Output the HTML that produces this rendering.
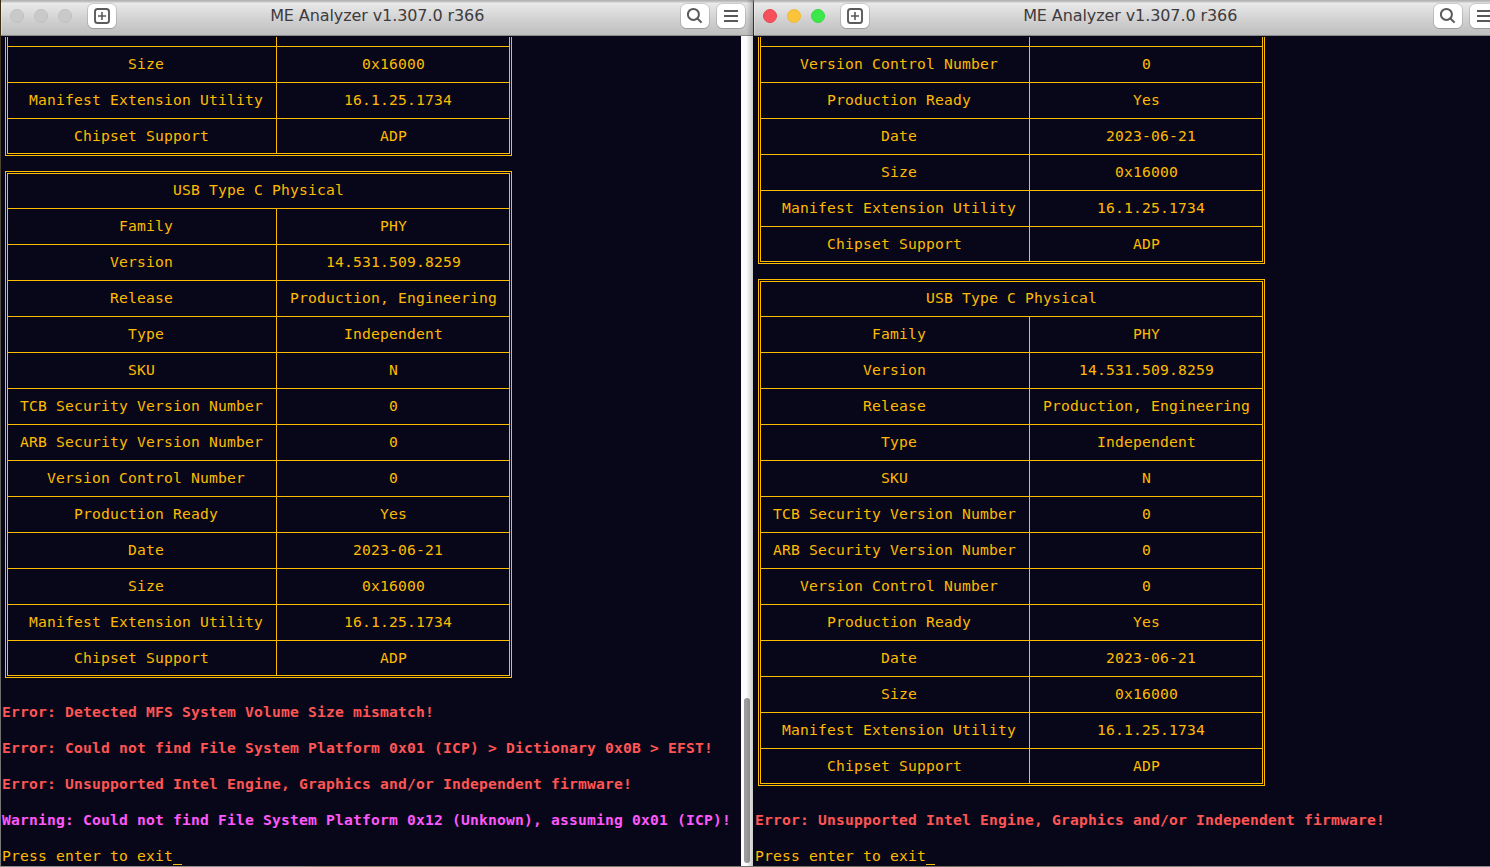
<!DOCTYPE html>
<html><head><meta charset="utf-8"><title>ME Analyzer v1.307.0 r366</title>
<style>
html,body{margin:0;padding:0}
body{width:1490px;height:867px;overflow:hidden;position:relative;background:linear-gradient(#3a2b0a 0,#4a4228 120px,#5c5a50 400px,#6e6e6a 700px,#7c7c78 865px,#7a7872 866px);font-family:"DejaVu Sans","Liberation Sans",sans-serif}
.win{position:absolute;top:0;height:866px;overflow:hidden;background:#08071a}
#wl{left:1px;width:752px}
#wr{left:753px;width:760px}
.bl{position:absolute;z-index:5;left:0;top:0;width:1px;height:866px;background:linear-gradient(#707070 0,#3c3c3c 3px,#2c2c2c 35px,#05040f 36px)}
.in{position:absolute;top:0;height:866px;width:760px}
#wl .in{left:-1px}
#wr .in{left:0}
.tb{position:absolute;left:0;top:0;width:760px;height:36px;box-sizing:border-box;background:linear-gradient(#b0b0b0 0,#b4b4b4 .5px,#c3c3c3 1.5px,#d6d6d6 2.5px,#ebebeb 3.5px,#e7e7e7 4.5px,#d2d2d2 19px,#bfbfbf 34px,#bdbdbd 34.9px,#8e8e8e 35px,#888 36px)}
.c{position:absolute;top:9px;width:14px;height:14px;border-radius:50%;box-sizing:border-box;background:#c9c9c9;border:1px solid #c0c0c0}
.c1{left:10px}.c2{left:34px}.c3{left:58px}
.act .c1{background:#f4515a;border-color:#ec4652}
.act .c2{background:#f9c43c;border-color:#f0b933}
.act .c3{background:#3ce74c;border-color:#32db42}
.btn{position:absolute;top:4px;width:28px;height:24px;background:#fff;border-radius:5.5px;box-shadow:0 0 0 1px rgba(0,0,0,.12),0 1px 1px rgba(0,0,0,.10)}
.btn svg{display:block}
.title{position:absolute;left:0.7px;width:753px;letter-spacing:-0.096px;top:0;height:36px;line-height:31px;text-align:center;font-size:16px;color:#403b3e;white-space:pre}
.term{position:absolute;left:0;top:0;width:760px;height:866px;font-family:"DejaVu Sans Mono","Liberation Mono",monospace;font-size:14.667px;color:#fdbb02}
.term i{position:absolute;display:block;background:#fdbb02}
.w{position:absolute;height:18px;line-height:18px;white-space:pre;letter-spacing:0.1762px}
.r{color:#ff5554;font-weight:bold}
.m{color:#fe58fb;font-weight:bold}
.sb{position:absolute;left:741px;top:36px;width:12px;height:830px;background:#fdfdfd}
.sh{position:absolute;left:746px;top:0;width:7px;height:866px;background:linear-gradient(90deg,rgba(0,0,0,0),rgba(0,0,0,.05) 2px,rgba(0,0,0,.2) 7px)}
.hl{position:absolute;left:1px;top:3px;width:1px;height:32px;background:rgba(255,255,255,.3)}
.sb b{position:absolute;left:3px;top:662px;width:6px;height:165px;border-radius:3px;background:#9d9d9d}
.dk{position:absolute;left:0;top:866px;width:1490px;height:1px;background:linear-gradient(90deg,#8e8e8a 0,#8c8c86 300px,#8a846a 320px,#77756c 700px,#6e6a60 900px,#86847e 1200px,#8a8a86 1490px)}
</style></head><body>
<div class="win" id="wl"><div class="in">
<div class="term">
<i style="left:7px;top:46px;width:503px;height:1px"></i>
<span class="w" style="left:128px;top:55px">Size</span>
<span class="w" style="left:362px;top:55px">0x16000</span>
<i style="left:7px;top:82px;width:503px;height:1px"></i>
<span class="w" style="left:29px;top:91px">Manifest Extension Utility</span>
<span class="w" style="left:344px;top:91px">16.1.25.1734</span>
<i style="left:7px;top:118px;width:503px;height:1px"></i>
<span class="w" style="left:74px;top:127px">Chipset Support</span>
<span class="w" style="left:380px;top:127px">ADP</span>
<i style="left:7px;top:153px;width:503px;height:1px"></i>
<i style="left:5px;top:155px;width:507px;height:1px"></i>
<i style="left:5px;top:37px;width:1px;height:119px"></i>
<i style="left:511px;top:37px;width:1px;height:119px"></i>
<i style="left:7px;top:37px;width:1px;height:117px"></i>
<i style="left:509px;top:37px;width:1px;height:117px"></i>
<i style="left:276px;top:37px;width:1px;height:117px"></i>
<i style="left:5px;top:171px;width:507px;height:1px"></i>
<i style="left:7px;top:173px;width:503px;height:1px"></i>
<span class="w" style="left:173px;top:181px">USB Type C Physical</span>
<i style="left:7px;top:208px;width:503px;height:1px"></i>
<span class="w" style="left:119px;top:217px">Family</span>
<span class="w" style="left:380px;top:217px">PHY</span>
<i style="left:7px;top:244px;width:503px;height:1px"></i>
<span class="w" style="left:110px;top:253px">Version</span>
<span class="w" style="left:326px;top:253px">14.531.509.8259</span>
<i style="left:7px;top:280px;width:503px;height:1px"></i>
<span class="w" style="left:110px;top:289px">Release</span>
<span class="w" style="left:290px;top:289px">Production, Engineering</span>
<i style="left:7px;top:316px;width:503px;height:1px"></i>
<span class="w" style="left:128px;top:325px">Type</span>
<span class="w" style="left:344px;top:325px">Independent</span>
<i style="left:7px;top:352px;width:503px;height:1px"></i>
<span class="w" style="left:128px;top:361px">SKU</span>
<span class="w" style="left:389px;top:361px">N</span>
<i style="left:7px;top:388px;width:503px;height:1px"></i>
<span class="w" style="left:20px;top:397px">TCB Security Version Number</span>
<span class="w" style="left:389px;top:397px">0</span>
<i style="left:7px;top:424px;width:503px;height:1px"></i>
<span class="w" style="left:20px;top:433px">ARB Security Version Number</span>
<span class="w" style="left:389px;top:433px">0</span>
<i style="left:7px;top:460px;width:503px;height:1px"></i>
<span class="w" style="left:47px;top:469px">Version Control Number</span>
<span class="w" style="left:389px;top:469px">0</span>
<i style="left:7px;top:496px;width:503px;height:1px"></i>
<span class="w" style="left:74px;top:505px">Production Ready</span>
<span class="w" style="left:380px;top:505px">Yes</span>
<i style="left:7px;top:532px;width:503px;height:1px"></i>
<span class="w" style="left:128px;top:541px">Date</span>
<span class="w" style="left:353px;top:541px">2023-06-21</span>
<i style="left:7px;top:568px;width:503px;height:1px"></i>
<span class="w" style="left:128px;top:577px">Size</span>
<span class="w" style="left:362px;top:577px">0x16000</span>
<i style="left:7px;top:604px;width:503px;height:1px"></i>
<span class="w" style="left:29px;top:613px">Manifest Extension Utility</span>
<span class="w" style="left:344px;top:613px">16.1.25.1734</span>
<i style="left:7px;top:640px;width:503px;height:1px"></i>
<span class="w" style="left:74px;top:649px">Chipset Support</span>
<span class="w" style="left:380px;top:649px">ADP</span>
<i style="left:7px;top:675px;width:503px;height:1px"></i>
<i style="left:5px;top:677px;width:507px;height:1px"></i>
<i style="left:5px;top:171px;width:1px;height:507px"></i>
<i style="left:511px;top:171px;width:1px;height:507px"></i>
<i style="left:7px;top:173px;width:1px;height:503px"></i>
<i style="left:509px;top:173px;width:1px;height:503px"></i>
<i style="left:276px;top:208px;width:1px;height:468px"></i>
<span class="w r" style="left:2px;top:703px">Error: Detected MFS System Volume Size mismatch!</span>
<span class="w r" style="left:2px;top:739px">Error: Could not find File System Platform 0x01 (ICP) &gt; Dictionary 0x0B &gt; EFST!</span>
<span class="w r" style="left:2px;top:775px">Error: Unsupported Intel Engine, Graphics and/or Independent firmware!</span>
<span class="w m" style="left:2px;top:811px">Warning: Could not find File System Platform 0x12 (Unknown), assuming 0x01 (ICP)!</span>
<span class="w" style="left:2px;top:847px">Press enter to exit</span>
<i style="left:173px;top:864px;width:9px;height:1px"></i>
</div>
<div class="sb"><b></b></div>
<div class="tb">
<b class="c c1"></b><b class="c c2"></b><b class="c c3"></b>
<div class="btn" style="left:88px"><svg width="28" height="24" viewBox="0 0 28 24"><rect x="7" y="5" width="14" height="14" rx="2.6" ry="2.6" fill="none" stroke="#5b5b5b" stroke-width="1.9"/><path d="M10 12h8M14 8v8" stroke="#595959" stroke-width="1.6" fill="none"/></svg></div>
<div class="hl"></div><div class="title">ME Analyzer v1.307.0 r366</div>
<div class="btn" style="left:681px"><svg width="28" height="24" viewBox="0 0 28 24"><circle cx="12.4" cy="10.4" r="5.5" fill="none" stroke="#595959" stroke-width="2"/><path d="M16.2 14.2L20.6 18.6" stroke="#595959" stroke-width="2" fill="none"/></svg></div>
<div class="btn" style="left:717px"><svg width="28" height="24" viewBox="0 0 28 24"><path d="M7 7h14M7 12h14M7 17h14" stroke="#595959" stroke-width="2" fill="none"/></svg></div>
</div>
<div class="sh"></div>
</div></div>
<div class="win" id="wr"><div class="in">
<div class="term">
<i style="left:7px;top:46px;width:503px;height:1px"></i>
<span class="w" style="left:47px;top:55px">Version Control Number</span>
<span class="w" style="left:389px;top:55px">0</span>
<i style="left:7px;top:82px;width:503px;height:1px"></i>
<span class="w" style="left:74px;top:91px">Production Ready</span>
<span class="w" style="left:380px;top:91px">Yes</span>
<i style="left:7px;top:118px;width:503px;height:1px"></i>
<span class="w" style="left:128px;top:127px">Date</span>
<span class="w" style="left:353px;top:127px">2023-06-21</span>
<i style="left:7px;top:154px;width:503px;height:1px"></i>
<span class="w" style="left:128px;top:163px">Size</span>
<span class="w" style="left:362px;top:163px">0x16000</span>
<i style="left:7px;top:190px;width:503px;height:1px"></i>
<span class="w" style="left:29px;top:199px">Manifest Extension Utility</span>
<span class="w" style="left:344px;top:199px">16.1.25.1734</span>
<i style="left:7px;top:226px;width:503px;height:1px"></i>
<span class="w" style="left:74px;top:235px">Chipset Support</span>
<span class="w" style="left:380px;top:235px">ADP</span>
<i style="left:7px;top:261px;width:503px;height:1px"></i>
<i style="left:5px;top:263px;width:507px;height:1px"></i>
<i style="left:5px;top:37px;width:1px;height:227px"></i>
<i style="left:511px;top:37px;width:1px;height:227px"></i>
<i style="left:7px;top:37px;width:1px;height:225px"></i>
<i style="left:509px;top:37px;width:1px;height:225px"></i>
<i style="left:276px;top:37px;width:1px;height:225px"></i>
<i style="left:5px;top:279px;width:507px;height:1px"></i>
<i style="left:7px;top:281px;width:503px;height:1px"></i>
<span class="w" style="left:173px;top:289px">USB Type C Physical</span>
<i style="left:7px;top:316px;width:503px;height:1px"></i>
<span class="w" style="left:119px;top:325px">Family</span>
<span class="w" style="left:380px;top:325px">PHY</span>
<i style="left:7px;top:352px;width:503px;height:1px"></i>
<span class="w" style="left:110px;top:361px">Version</span>
<span class="w" style="left:326px;top:361px">14.531.509.8259</span>
<i style="left:7px;top:388px;width:503px;height:1px"></i>
<span class="w" style="left:110px;top:397px">Release</span>
<span class="w" style="left:290px;top:397px">Production, Engineering</span>
<i style="left:7px;top:424px;width:503px;height:1px"></i>
<span class="w" style="left:128px;top:433px">Type</span>
<span class="w" style="left:344px;top:433px">Independent</span>
<i style="left:7px;top:460px;width:503px;height:1px"></i>
<span class="w" style="left:128px;top:469px">SKU</span>
<span class="w" style="left:389px;top:469px">N</span>
<i style="left:7px;top:496px;width:503px;height:1px"></i>
<span class="w" style="left:20px;top:505px">TCB Security Version Number</span>
<span class="w" style="left:389px;top:505px">0</span>
<i style="left:7px;top:532px;width:503px;height:1px"></i>
<span class="w" style="left:20px;top:541px">ARB Security Version Number</span>
<span class="w" style="left:389px;top:541px">0</span>
<i style="left:7px;top:568px;width:503px;height:1px"></i>
<span class="w" style="left:47px;top:577px">Version Control Number</span>
<span class="w" style="left:389px;top:577px">0</span>
<i style="left:7px;top:604px;width:503px;height:1px"></i>
<span class="w" style="left:74px;top:613px">Production Ready</span>
<span class="w" style="left:380px;top:613px">Yes</span>
<i style="left:7px;top:640px;width:503px;height:1px"></i>
<span class="w" style="left:128px;top:649px">Date</span>
<span class="w" style="left:353px;top:649px">2023-06-21</span>
<i style="left:7px;top:676px;width:503px;height:1px"></i>
<span class="w" style="left:128px;top:685px">Size</span>
<span class="w" style="left:362px;top:685px">0x16000</span>
<i style="left:7px;top:712px;width:503px;height:1px"></i>
<span class="w" style="left:29px;top:721px">Manifest Extension Utility</span>
<span class="w" style="left:344px;top:721px">16.1.25.1734</span>
<i style="left:7px;top:748px;width:503px;height:1px"></i>
<span class="w" style="left:74px;top:757px">Chipset Support</span>
<span class="w" style="left:380px;top:757px">ADP</span>
<i style="left:7px;top:783px;width:503px;height:1px"></i>
<i style="left:5px;top:785px;width:507px;height:1px"></i>
<i style="left:5px;top:279px;width:1px;height:507px"></i>
<i style="left:511px;top:279px;width:1px;height:507px"></i>
<i style="left:7px;top:281px;width:1px;height:503px"></i>
<i style="left:509px;top:281px;width:1px;height:503px"></i>
<i style="left:276px;top:316px;width:1px;height:468px"></i>
<span class="w r" style="left:2px;top:811px">Error: Unsupported Intel Engine, Graphics and/or Independent firmware!</span>
<span class="w" style="left:2px;top:847px">Press enter to exit</span>
<i style="left:173px;top:864px;width:9px;height:1px"></i>
</div>
<div class="tb act">
<b class="c c1"></b><b class="c c2"></b><b class="c c3"></b>
<div class="btn" style="left:88px"><svg width="28" height="24" viewBox="0 0 28 24"><rect x="7" y="5" width="14" height="14" rx="2.6" ry="2.6" fill="none" stroke="#5b5b5b" stroke-width="1.9"/><path d="M10 12h8M14 8v8" stroke="#595959" stroke-width="1.6" fill="none"/></svg></div>
<div class="hl"></div><div class="title">ME Analyzer v1.307.0 r366</div>
<div class="btn" style="left:681px"><svg width="28" height="24" viewBox="0 0 28 24"><circle cx="12.4" cy="10.4" r="5.5" fill="none" stroke="#595959" stroke-width="2"/><path d="M16.2 14.2L20.6 18.6" stroke="#595959" stroke-width="2" fill="none"/></svg></div>
<div class="btn" style="left:717px"><svg width="28" height="24" viewBox="0 0 28 24"><path d="M7 7h14M7 12h14M7 17h14" stroke="#595959" stroke-width="2" fill="none"/></svg></div>
</div>
<div class="bl"></div>
</div></div>
<div class="dk"></div>
</body></html>
